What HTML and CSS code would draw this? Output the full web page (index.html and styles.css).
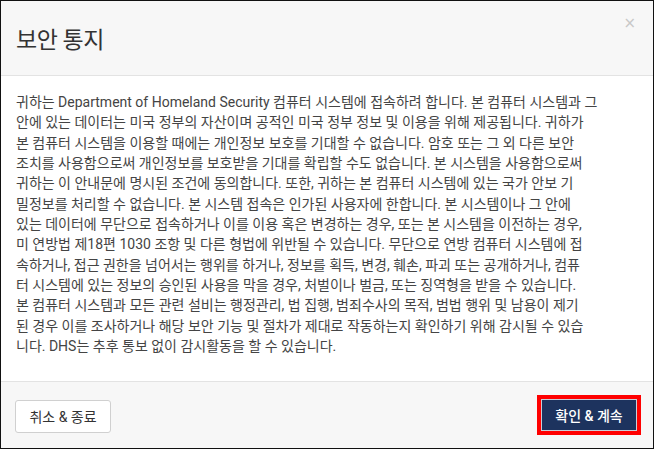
FILE: index.html
```html
<!DOCTYPE html>
<html lang="ko">
<head>
<meta charset="utf-8">
<title>보안 통지</title>
<link rel="stylesheet" href="styles.css">
</head>
<body>
<div class="dialog">
  <div class="dialog-header">
    <h1 class="dialog-title">보안 통지</h1>
    <span class="close">×</span>
  </div>
  <div class="dialog-body">
    <p class="notice">귀하는 Department of Homeland Security 컴퓨터 시스템에 접속하려 합니다. 본 컴퓨터 시스템과 그<br>안에 있는 데이터는 미국 정부의 자산이며 공적인 미국 정부 정보 및 이용을 위해 제공됩니다. 귀하가<br>본 컴퓨터 시스템을 이용할 때에는 개인정보 보호를 기대할 수 없습니다. 암호 또는 그 외 다른 보안<br>조치를 사용함으로써 개인정보를 보호받을 기대를 확립할 수도 없습니다. 본 시스템을 사용함으로써<br>귀하는 이 안내문에 명시된 조건에 동의합니다. 또한, 귀하는 본 컴퓨터 시스템에 있는 국가 안보 기<br>밀정보를 처리할 수 없습니다. 본 시스템 접속은 인가된 사용자에 한합니다. 본 시스템이나 그 안에<br>있는 데이터에 무단으로 접속하거나 이를 이용 혹은 변경하는 경우, 또는 본 시스템을 이전하는 경우,<br>미 연방법 제18편 1030 조항 및 다른 형법에 위반될 수 있습니다. 무단으로 연방 컴퓨터 시스템에 접<br>속하거나, 접근 권한을 넘어서는 행위를 하거나, 정보를 획득, 변경, 훼손, 파괴 또는 공개하거나, 컴퓨<br>터 시스템에 있는 정보의 승인된 사용을 막을 경우, 처벌이나 벌금, 또는 징역형을 받을 수 있습니다.<br>본 컴퓨터 시스템과 모든 관련 설비는 행정관리, 법 집행, 범죄수사의 목적, 범법 행위 및 남용이 제기<br>된 경우 이를 조사하거나 해당 보안 기능 및 절차가 제대로 작동하는지 확인하기 위해 감시될 수 있습<br>니다. DHS는 추후 통보 없이 감시활동을 할 수 있습니다.</p>
  </div>
  <div class="dialog-footer">
    <button class="btn btn-default">취소 &amp; 종료</button>
    <span class="highlight"><button class="btn btn-primary">확인 &amp; 계속</button></span>
  </div>
</div>
</body>
</html>
```

FILE: styles.css
```css
* { box-sizing: border-box; }
html, body { margin: 0; padding: 0; background: #fff; }
body {
  font-family: Roboto, "Noto Sans CJK KR", sans-serif;
  color: #444;
}
.dialog {
  width: 654px;
  height: 449px;
  border: 1px solid #111;
  display: flex;
  flex-direction: column;
  overflow: hidden;
}
.dialog-header {
  position: relative;
  height: 75px;
  flex: none;
  background: #f7f7f7;
  border-bottom: 1px solid #e3e3e3;
  display: flex;
  align-items: center;
  padding: 0 15px;
}
.dialog-title {
  margin: 0;
  font-size: 23px;
  font-weight: 400;
  color: #333;
  letter-spacing: -0.5px;
}
.close {
  position: absolute;
  top: 12px;
  right: 17px;
  font-size: 15px;
  line-height: 20px;
  color: #c8c8c8;
  font-family: "DejaVu Sans", sans-serif;
}
.dialog-body {
  flex: 1;
  background: #fff;
  padding: 16px 15px 0;
}
.notice {
  margin: 0;
  font-size: 14px;
  line-height: 20.33px;
  white-space: nowrap;
  color: #444;
}
.dialog-footer {
  flex: none;
  height: 67px;
  background: #f7f7f7;
  border-top: 1px solid #e3e3e3;
  display: flex;
  align-items: center;
  justify-content: space-between;
  padding: 0 12px 0 14px;
}
.btn {
  font-family: Roboto, "Noto Sans CJK KR", sans-serif;
  font-size: 14px;
  height: 33px;
  padding: 0 11px;
  border-radius: 3px;
  cursor: pointer;
}
.btn-default {
  background: #fff;
  border: 1px solid #d0d0d0;
  color: #333;
  width: 96px;
  margin-top: 2px;
}
.highlight {
  display: inline-flex;
  border: 4px solid #f00;
  margin-top: 0;
}
.btn-primary {
  background: #1d335e;
  color: #fff;
  border: 1px solid #c9ced8;
  border-radius: 0;
  width: 96px;
  height: 32px;
  font-weight: 500;
}
```
